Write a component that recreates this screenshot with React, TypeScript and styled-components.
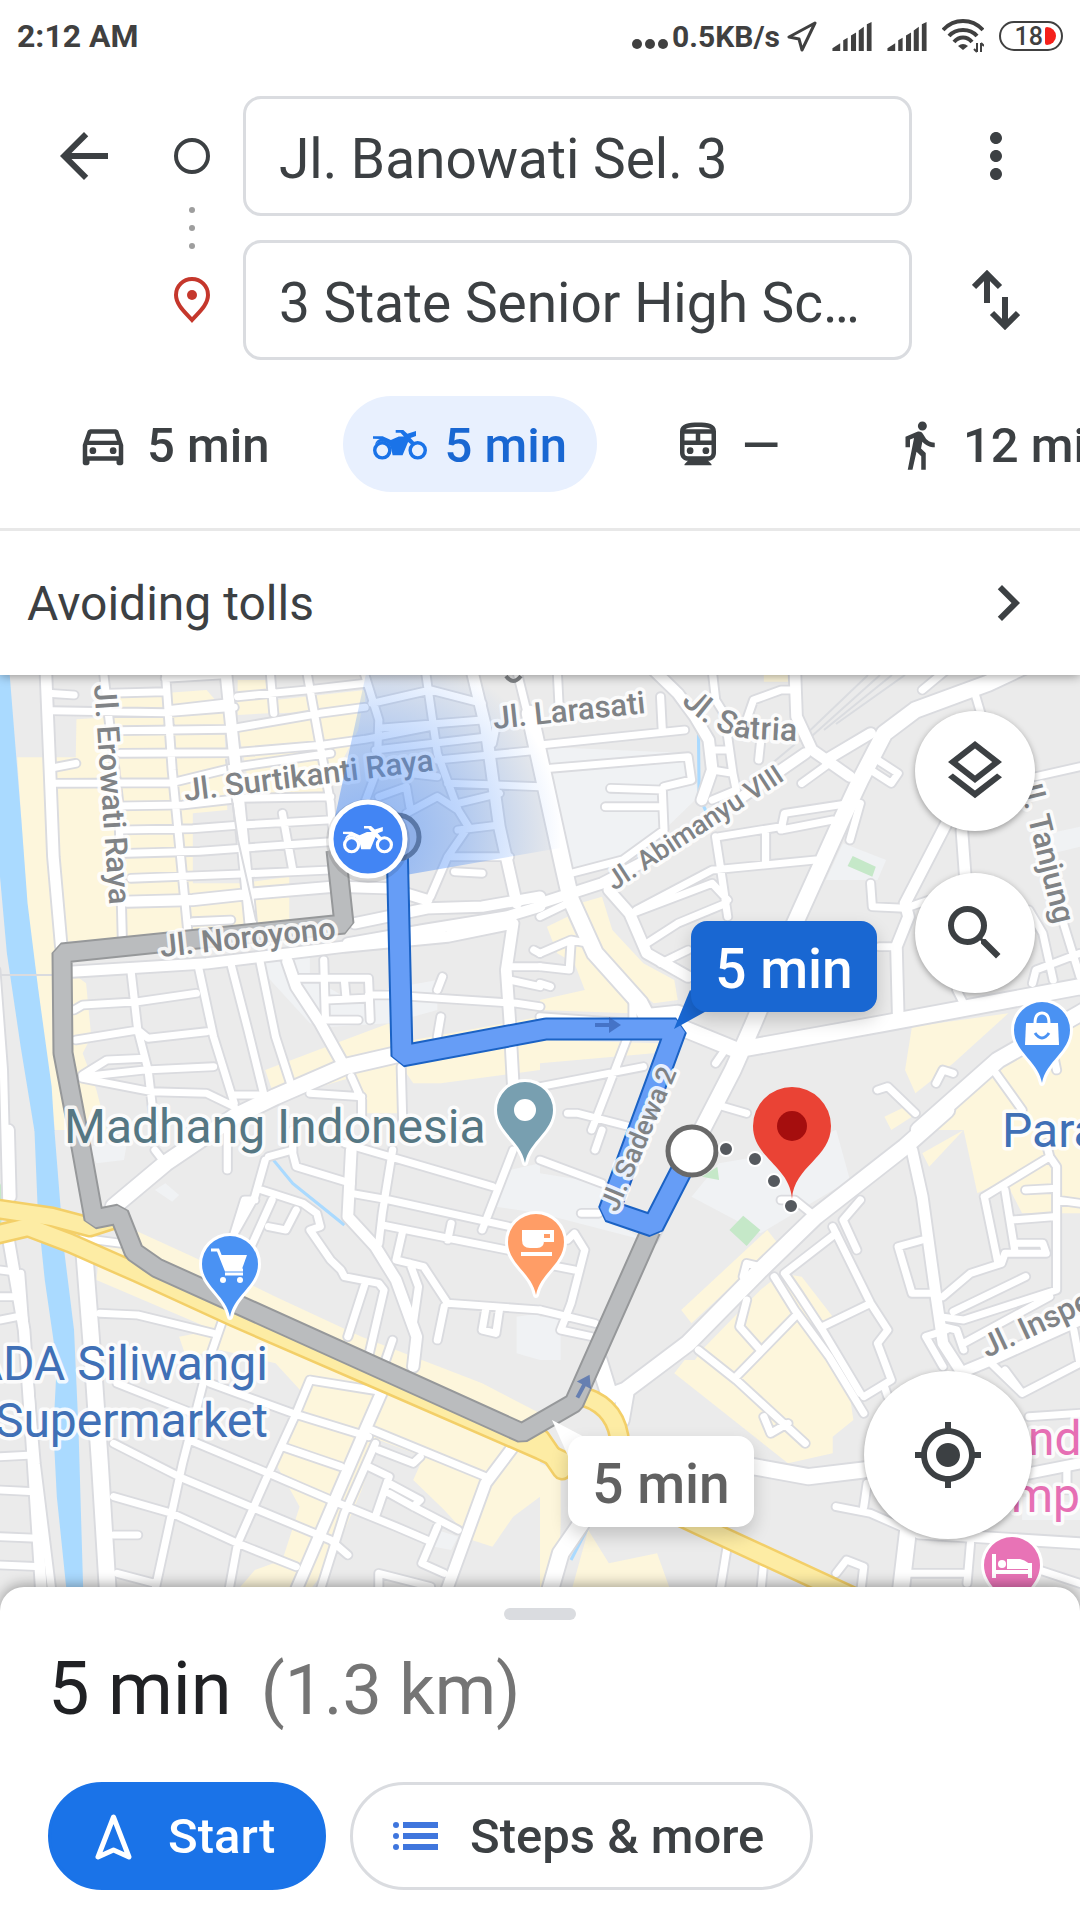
import React from 'react';
import styled, { createGlobalStyle } from 'styled-components';
import {
  MdArrowBack,
  MdChevronRight,
  MdDirectionsWalk,
  MdMoreVert,
  MdMyLocation,
  MdOutlineDirectionsCar,
  MdOutlineDirectionsTransit,
  MdOutlineLayers,
  MdSearch,
} from 'react-icons/md';

const ink = '#3c4043';
const line = '#dadce0';
const blue = '#1a73e8';
const deepBlue = '#1967d2';
const sans = "Roboto, 'Noto Sans', 'Liberation Sans', sans-serif";

const GlobalStyle = createGlobalStyle`
  *, *::before, *::after { box-sizing: border-box; }
  body { margin: 0; background: #fff; }
  button, input { font-family: inherit; color: inherit; margin: 0; }
  button { border: 0; padding: 0; background: none; cursor: pointer; }
  svg { display: block; flex: none; }
`;

const Page = styled.div`
  display: flex;
  flex-direction: column;
  min-height: 100vh;
  font-family: ${sans};
  color: ${ink};
  background: #fff;
  overflow: hidden;
`;

/* ---------- status bar ---------- */

const StatusBar = styled.div`
  display: flex;
  align-items: center;
  justify-content: space-between;
  height: 72px;
  padding: 0 17px;
  font-weight: 700;
  font-size: 32px;
  color: #404040;
`;

const StatusItems = styled.div`
  display: flex;
  align-items: center;
  gap: 15px;
`;

const Speed = styled.span`
  display: flex;
  align-items: center;
  gap: 4px;
  font-size: 30px;
  margin-right: -8px;
`;

const Battery = styled.span`
  display: flex;
  align-items: center;
  justify-content: flex-end;
  gap: 2px;
  width: 64px;
  height: 30px;
  padding-right: 5px;
  border: 2px solid #404040;
  border-radius: 15px;
  font-size: 25px;
  font-weight: 500;
`;

const Charge = styled.span`
  width: 11px;
  height: 18px;
  border-radius: 2px 9px 9px 2px;
  background: #f4201b;
`;

/* ---------- header ---------- */

const Header = styled.header`
  position: relative;
  z-index: 2;
  background: #fff;
  box-shadow: 0 1px 10px rgba(0, 0, 0, 0.4);
`;

const Endpoints = styled.form`
  display: grid;
  grid-template-columns: 168px 48px 1fr 168px;
  grid-template-rows: 120px 120px;
  row-gap: 24px;
  padding-top: 24px;
`;

const IconButton = styled.button`
  display: grid;
  place-items: center;
  font-size: 72px;
`;

const Markers = styled.div`
  grid-column: 2;
  grid-row: 1 / span 2;
  display: flex;
  flex-direction: column;
  align-items: center;
  justify-content: space-between;
  padding: 36px 0;
`;

const Field = styled.input`
  grid-column: 3;
  min-width: 0;
  margin-left: 27px;
  padding: 6px 32px 0 33px;
  border: 3px solid ${line};
  border-radius: 18px;
  background: #fff;
  outline: none;
  font-size: 55px;
  text-overflow: ellipsis;
`;

const Modes = styled.nav`
  display: flex;
  gap: 44px;
  padding: 36px 0 36px 46px;
  border-bottom: 3px solid #e8e8e8;
  overflow: hidden;
`;

const Mode = styled.button<{ $on?: boolean }>`
  flex: none;
  display: flex;
  align-items: center;
  gap: 17px;
  min-width: 177px;
  height: 96px;
  padding: 2px 30px 0;
  border-radius: 48px;
  font-size: 49px;
  font-weight: 500;
  white-space: nowrap;
  color: ${(p) => (p.$on ? deepBlue : ink)};
  background: ${(p) => (p.$on ? '#e8f0fe' : 'transparent')};
  svg { color: ${(p) => (p.$on ? blue : ink)}; }
`;

const Options = styled.button`
  display: flex;
  align-items: center;
  justify-content: space-between;
  width: 100%;
  height: 144px;
  padding: 0 36px 0 27px;
  font-size: 48px;
`;

/* ---------- map ---------- */

const MapArea = styled.main`
  position: relative;
  flex: 1;
  min-height: 600px;
  background: #ebebeb;
  overflow: hidden;
`;

const MapCanvas = styled.svg`
  position: absolute;
  inset: 0;
  width: 100%;
  height: 100%;
`;

const Fab = styled.button<{ $big?: boolean }>`
  display: grid;
  place-items: center;
  width: ${(p) => (p.$big ? 168 : 120)}px;
  height: ${(p) => (p.$big ? 168 : 120)}px;
  border-radius: 50%;
  background: #fff;
  font-size: 72px;
  box-shadow: 0 2px 6px rgba(0, 0, 0, 0.35);
`;

const FabColumn = styled.div`
  position: absolute;
  top: 36px;
  right: 45px;
  display: flex;
  flex-direction: column;
  gap: 42px;
`;

const FabCorner = styled.div`
  position: absolute;
  right: 48px;
  bottom: 76px;
`;

const Callout = styled.button<{ $x: number; $y: number; $main?: boolean }>`
  position: absolute;
  left: ${(p) => p.$x}px;
  top: ${(p) => p.$y}px;
  width: 186px;
  height: 91px;
  padding-top: 5px;
  border-radius: 16px;
  font-size: 55px;
  font-weight: 500;
  color: ${(p) => (p.$main ? '#fff' : '#616161')};
  background: ${(p) => (p.$main ? deepBlue : '#fff')};
  box-shadow: 0 8px 18px rgba(0, 0, 0, 0.18);
`;

const Label = styled.text<{ $size?: number; $tone?: string }>`
  font-family: ${sans};
  font-size: ${(p) => p.$size ?? 31}px;
  font-weight: ${(p) => (p.$tone ? 400 : 500)};
  fill: ${(p) => p.$tone ?? '#808386'};
  stroke: #fff;
  stroke-opacity: 0.85;
  stroke-width: 7px;
  stroke-linejoin: round;
  paint-order: stroke;
`;

/* ---------- bottom sheet ---------- */

const Sheet = styled.section`
  position: relative;
  z-index: 2;
  margin-top: -28px;
  padding: 21px 48px 30px;
  border-radius: 24px 24px 0 0;
  background: #fff;
  box-shadow: 0 -2px 14px rgba(0, 0, 0, 0.35);
`;

const Handle = styled.div`
  width: 72px;
  height: 12px;
  margin: 0 auto;
  border-radius: 6px;
  background: ${line};
`;

const Summary = styled.h1`
  display: flex;
  align-items: baseline;
  gap: 29px;
  margin: 27px 0 51px;
  font-size: 74px;
  line-height: 84px;
  font-weight: 400;
  color: #202124;
`;

const Distance = styled.span`
  font-size: 70px;
  line-height: 80px;
  color: #757575;
`;

const Actions = styled.div`
  display: flex;
  gap: 24px;
`;

const Action = styled.button<{ $primary?: boolean }>`
  display: flex;
  align-items: center;
  gap: ${(p) => (p.$primary ? 36 : 32)}px;
  min-width: 278px;
  height: 108px;
  padding: 0 46px 0 ${(p) => (p.$primary ? 44 : 40)}px;
  border: 3px solid ${(p) => (p.$primary ? blue : line)};
  border-radius: 54px;
  font-size: 49px;
  font-weight: 500;
  color: ${(p) => (p.$primary ? '#fff' : ink)};
  background: ${(p) => (p.$primary ? blue : '#fff')};
`;

/* ---------- icons ---------- */

const Motorcycle = ({ width = 54 }: { width?: number }) => (
  <svg width={width} height={(width * 91) / 157} viewBox="0 0 157 91" fill="currentColor" aria-hidden>
    <circle cx="27" cy="62" r="22" fill="none" stroke="currentColor" strokeWidth="10" />
    <circle cx="130" cy="62" r="22" fill="none" stroke="currentColor" strokeWidth="10" />
    <path d="M0 21H28L52 32L75 22H90L80 11H66V3H88L100 14L125 6V20L109 26L124 42L112 46L102 38L86 76H57L54 62Q50 38 27 36Q14 36 6 44Q10 32 20 29L0 28Z" />
  </svg>
);

const Signal = () => (
  <svg width="40" height="29" viewBox="0 0 116 86" fill="currentColor" aria-hidden>
    <path d="M0 86V78L23 63V86ZM32 86V54L45 47V86ZM55 86V40L70 31V86ZM78 86V25L93 14V86ZM102 86V7L116 0V86Z" />
  </svg>
);

const Wifi = () => (
  <svg width="42" height="34" viewBox="0 0 42 34" fill="none" stroke="currentColor" strokeWidth="4" aria-hidden>
    <path d="M1 11C12 -1 30 -1 41 11M7 17C14 9 28 9 35 17M12 23C17 17 25 17 30 23" />
    <path d="M16 27Q21 23 26 27L21 31Z" fill="currentColor" stroke="none" />
    <path d="M35 24V33M39 33V24M32 30L35 33M42 27L39 24" strokeWidth="2" />
  </svg>
);

const Share = () => (
  <svg width="30" height="31" viewBox="0 0 30 31" fill="none" stroke="currentColor" strokeWidth="3" strokeLinejoin="round" aria-hidden>
    <path d="M28 2L2 16L12 18L15 29Z" />
  </svg>
);

const Dots = () => (
  <svg width="36" height="28" viewBox="0 0 36 28" fill="currentColor" aria-hidden>
    <circle cx="5" cy="22" r="5" />
    <circle cx="18" cy="22" r="5" />
    <circle cx="31" cy="22" r="5" />
  </svg>
);

const Swap = () => (
  <svg width="48" height="60" viewBox="0 0 48 60" fill="none" stroke="currentColor" strokeWidth="6" aria-hidden>
    <path d="M15 33V5M2 17L15 4L28 17M33 27V55M20 43L33 56L46 43" />
  </svg>
);

const Compass = () => (
  <svg width="37" height="48" viewBox="0 0 37 48" fill="none" stroke="currentColor" strokeWidth="5" strokeLinejoin="round" aria-hidden>
    <path d="M18.500 5L3 45L18.500 38L34 45Z" />
  </svg>
);

const Steps = () => (
  <svg width="45" height="30" viewBox="0 0 45 30" fill="#3f76dd" aria-hidden>
    <circle cx="3" cy="4" r="3" />
    <circle cx="3" cy="15" r="3" />
    <circle cx="3" cy="26" r="3" />
    <path d="M10 1H45V7H10ZM10 12H45V18H10ZM10 23H45V29H10Z" />
  </svg>
);

/* ---------- map data: four tiles, each drawn on a 1568 x 1380 grid ---------- */

type Tile = {
  x: number;
  y: number;
  shops: string;
  campus: string;
  park: string;
  water: string;
  stream: string;
  small: string;
  medium: string;
  large: string;
};

const tiles: Tile[] = [
  {
    x: 0,
    y: 670,
    shops:
      'M50 262H220L222 148L340 140V80L470 70L600 60L650 120L660 420L560 430V640L700 640L840 620V750L560 790L190 815L205 905L250 940L265 1100L240 1150L280 1260L310 1380H160L110 950L80 720L62 450ZM690 170L900 140L1060 60L1040 180L980 300L720 330ZM690 30H780V130L690 135ZM800 90L1060 60V120L800 130ZM770 1200L1000 1110L1130 1060L1200 1110L1568 1040V1200L1280 1240H1200L1160 1180L800 1290ZM1030 1210L1160 1180V1330H1050ZM720 330L980 310L960 370L720 390Z',
    campus: 'M740 880L900 860V920L1000 980L1270 930V1020L1130 1060L960 1070L900 1060Z',
    park: '',
    water: 'M0 0H27L62 450L80 700L110 950L150 1250L158 1382H100L60 1130L20 850L0 620Z',
    stream: '',
    small:
      'M140 70L215 75M145 295L220 280M150 122L480 128L680 112M310 70L480 65M480 25L640 15M500 118L650 100M340 182L660 178L930 130L1060 112M350 250L680 248L940 225L1060 208L1250 170M160 340L500 338L690 290L960 250M340 408L530 405L700 385L960 380M350 480L560 476L700 465L950 450M370 550L580 544L960 515M380 625L700 612L960 600M560 755L670 750M690 80L890 60L1060 40M300 0L345 400L355 800M480 0L500 300L545 780M785 10L795 130M820 430L850 600M890 0L925 200L960 400L975 600M1055 0L1100 150L1095 300L1000 560M1235 0L1270 250L1330 420M1500 0L1560 250M1080 100L1250 60L1400 100M1100 175L1400 150M1090 240L1420 200M1270 270L1568 240M1300 340L1568 350M1330 400L1450 370M1180 430L1270 380L1330 420L1360 470L1300 560L1250 680M1330 480L1450 465M1310 560L1480 560M1320 605L1400 610M1100 300L1270 320M1100 380L1180 350L1190 410M380 900L400 1080L430 1200L450 1380M575 885L620 1100L680 1300M670 880L720 1080L770 1290M755 875L800 1100L850 1260M940 870L945 1050H1040M870 925H1070L1075 1050M950 990L1060 985M1000 930L1005 985M1070 975H1130L1500 1000L1568 1010M215 1020L240 1005L400 995L570 970M220 1110L400 1080L430 1105L600 1085M240 1215L310 1170L420 1165M240 1220L420 1200L620 1190M240 1225L440 1265L600 1270L680 1310M680 1275H750M1165 1190L1170 1380M1020 1220L1050 1290V1340M900 1270L1050 1280M1285 920L1270 960M1280 1040L1270 1100M1480 890H1568M1480 930L1568 950M-12 900L10 1200L20 1600M1440 170L1430 220M1568 850L1550 840',
    medium:
      'M133 0L145 300L155 560L178 830M655 0L685 300L730 780M1370 0L1410 170L1450 470L1500 700M370 695L560 690L740 670L970 650L1130 655L1240 690M210 905L600 880L1000 830L1300 800L1490 760M1030 760L1240 715L1400 710L1568 680M1010 820L1230 780L1470 740L1568 710M835 875L860 950L930 1060L1000 1190M1490 760L1470 900L1480 1050L1490 1240',
    large: 'M330 1610L480 1480L680 1340L800 1280L1000 1190L1170 1150L1568 1080',
  },
  {
    x: 540,
    y: 670,
    shops:
      'M115 700L180 680L210 780L300 880L390 930L400 990L330 1000L280 960L180 870ZM20 770L80 740L110 810L180 880L260 980V1030L0 1020V990L130 960L100 880L50 850ZM0 1110L350 1120L330 1150L0 1180ZM1080 1070L1360 1030L1200 1180L1090 1270L1060 1200ZM1568 1030L1380 1110L1180 1330L1150 1380H1568ZM1000 1340L1060 1310L1080 1340L1020 1380ZM650 0H720V35H650Z',
    campus: 'M0 230L440 250L460 380L340 500L240 560L90 600L40 320L0 300ZM880 520L1005 570L980 630L830 630ZM1480 490L1568 470V530L1490 550Z',
    park: 'M908 558L975 590L965 620L893 588Z',
    water: '',
    stream: 'M340 0L385 60M460 170L462 380L485 430',
    small:
      'M1260 60L1280 130M960 640L965 710L1060 715L1130 690M985 830H1030M1568 290L1440 320M1210 960L1230 1000M1420 720L1460 790L1490 930M1520 760L1568 920M1430 940L1440 900L1568 850M600 150L620 90L700 60H730M760 340L840 280M960 300L1020 340L1040 310L980 270M900 510L930 400M700 480L710 430L900 400M700 480L850 450M520 500L700 470M655 490V580M280 720L500 600L800 570M510 500L525 600L545 740M90 610L240 570L360 480L355 360L205 355M190 410H350M30 295L430 260L440 330L360 350M0 225L420 180M355 180L350 80M50 0L55 100M500 0L510 90L540 140M490 240H550M500 300L560 310L545 200L560 170M560 310L570 360L500 390M640 220L635 270M0 740L80 700M270 730L500 640L545 690M310 820L400 760L540 700M350 880L430 840M0 850L90 810L140 820M90 820L85 900L0 890M270 980V1060L150 1380M0 1250L300 1190M80 1330H110L260 1370M510 1180L530 1150M500 1300L600 1330M980 1260L1010 1250L1090 1330M1150 1240L1170 1200L1200 1210M1310 1190L1400 1320M1500 1200L1480 1100M0 1040L270 1060M0 940L30 950M1110 60L1180 0',
    medium:
      'M1180 460L1060 700L1070 740L1035 830L1040 1030M1225 480L1235 620M330 0L400 70L450 140L490 210L500 300L470 390M830 270L960 190M0 700L180 640L330 560L560 400L700 300L770 250M200 660L260 730L310 850L430 920M740 0L745 140L790 240L900 320',
    large:
      'M1568 -90L1300 40L1090 120L1000 190L930 330L880 440L740 760L620 1060L560 1200L440 1440L320 1700M380 1060L570 1140L1000 1060L1568 950M-30 130L70 600L90 690L160 850L290 1000L310 1040L400 1030M1700 950L1568 1030L1330 1170L1100 1380',
  },
  {
    x: 0,
    y: 1130,
    shops:
      'M390 300L560 380L800 500L1050 620L1400 760L1568 850V1100L1490 1160L1430 1250L1370 1230L1290 1140L1200 1050L1230 980L1100 930L1050 1080L960 1300L900 1380H690L740 1320L820 1290L870 1130L800 1000L830 900L880 790L800 700L640 660L540 680L520 620L620 600L280 450L290 350Z',
    campus: 'M1480 120L1568 100V250L1440 230ZM1500 560L1568 550V690L1500 670ZM260 50L370 30L360 90L280 100ZM450 180L480 160L520 195L500 215ZM1270 1200L1330 1220L1310 1260L1260 1250Z',
    park: 'M0 160L22 200L0 290Z',
    water: 'M100 0H158L185 350L215 600L228 900L245 1500H205L165 1100L155 900L165 700L130 450L110 250Z',
    stream: 'M790 85L850 160L1000 285',
    small:
      'M60 430L80 700L105 1000L150 1380M0 420L40 425M0 500H40M0 570L50 560M0 980L95 975M0 1080L100 1085M0 1220L110 1225M0 1305L120 1310M240 325L350 340M660 0V120M450 60L480 100M770 90L740 200L680 310L710 210H740M850 0V70L860 110L1020 160M780 80L850 60M1000 40L1430 170M760 180L880 220L920 250L930 290L900 300L960 390L990 420L1000 440L1100 460L1115 480L1070 680M790 210L720 370M780 290L830 300L860 240M1140 60L1110 250L1100 340M1020 190L1130 210L1568 310M1310 280L1300 330M1110 285L1568 380M1170 300L1150 390L1230 410L1300 520L1568 540M1190 400L1215 470L1200 580M1290 530L1270 630M1410 540L1400 600L1440 610L1450 540M1060 460L1010 620M1140 630L1120 690M1490 60L1400 300M290 550L400 555L620 610M650 560L610 680L530 1000L450 1380M340 760L560 850M610 760L850 850L1070 920M330 940L530 1045L750 1140L960 1230L1010 1275M550 930L780 1030L960 1110L1150 1190L1240 1230M330 1100L500 1150L690 1240L860 1310M820 950L990 1010M900 750L860 850L780 1030L690 1240L665 1380M900 750L1110 785M1090 940L1000 1150L930 1380M1080 900L1410 1040M1100 960L1200 1000L1220 980M1070 1010L1130 1040L1090 1160M1200 1130L1220 1110L1130 1060M1130 1090L1200 1130L1330 1200M1270 1190L1225 1300L1290 1330M330 1215H400M340 1330L450 1360M1100 1450V1330L1250 1370',
    medium:
      'M25 0L30 200M25 330L70 600L90 900L120 1380M1020 60L1010 260L1090 350L1150 450L1210 620L1200 710M1115 770L1060 900L960 1140L860 1380M1490 950L1410 1060L1290 1400',
    large: 'M245 370L270 700L290 1000L320 1500',
  },
  {
    x: 540,
    y: 1130,
    shops:
      'M410 540L660 300L690 340L440 580ZM470 660L640 480L700 430L760 440L850 560L820 600L900 800L910 870L850 920V970L720 1000L390 730L420 690L450 690ZM1110 70L1230 0H1568V250L1400 250L1350 150L1270 190L1230 0L1130 110ZM0 1000L60 1030V1180L50 1500H0ZM60 1500L140 1200L200 1300L340 1270L420 1500Z',
    campus: 'M0 130L180 160L170 250L300 330L0 250ZM440 200L520 100L630 80L860 0L900 150L640 310ZM0 560L60 560V690L0 690ZM1400 1100L1568 1120V1170H1400Z',
    park: 'M590 257L640 300L600 348L550 300ZM470 140L515 110L520 150Z',
    water: '',
    stream: 'M140 1190L90 1290',
    small:
      'M1110 330L1040 350L1080 490H1140M1170 500L1250 430L1340 400L1350 370H1470L1460 340H1380M1350 180L1380 370M1290 200L1330 400M1290 200L1480 80L1500 110V480L1410 510L1230 570L1160 560M1200 545L1410 440M1410 180L1500 175M1370 270L1490 260M1500 210L1568 220M1480 80L1470 40M1170 590L1210 600L1230 660M1180 600L1120 620L1170 710M1230 640L1480 500M1310 700L1400 790L1568 700M1350 720L1400 790M1550 600L1568 700M1420 860L1568 850M930 210L880 270L920 360M700 210H740L800 260M850 290L960 520L1010 600L980 640L1020 750L940 800M860 310L710 430M710 430L750 490L820 600L930 790M680 440L740 540L840 680L940 850M960 520L820 590M740 560L570 740M600 510L580 590L640 660M460 660L570 750L770 940M650 860L670 910L720 880M590 440L600 400L640 410M0 90L180 160M160 60L180 0M120 250H170M80 330L100 310L130 360L90 520L60 600L150 620M0 540L160 580M0 400L100 420M950 1060L940 1130M860 1130L960 1150L1070 1200M545 1240L520 1400M650 1290L640 1400M860 1330L890 1290L940 1310L930 1400M1250 1240L1240 1360M1060 1330H1230M1450 1320L1568 1360M1530 1020V1080M1000 770L1010 800',
    medium: 'M1080 60L1110 200L1150 500L1170 640L1220 720M1240 720L1310 690L1568 570M1100 1210L1568 1240M1420 1030L1568 1000',
    large: 'M1180 -60L1060 50L800 260L640 420L430 640L250 780L200 800M200 790L170 690M250 780L235 870M620 1010L780 1040L940 1020M1070 1190L1040 1450M120 1180L60 1270L10 1450',
  },
];

const roadSizes = [
  ['small', 21],
  ['medium', 31],
  ['large', 46],
] as const;

const tileTransform = (t: Tile) => `translate(${t.x} ${t.y}) scale(${540 / 1568} ${460 / 1380})`;

const highways = [
  'M-10 1208L52 1217L90 1227L118 1218',
  'M-10 1236L28 1227L70 1243L138 1273L234 1317L386 1383L540 1450L700 1526L860 1600',
  'M585 1397Q618 1408 620 1445',
  'M540 1438L562 1470',
];

const bluePath = 'M397 840L402 1056L546 1029H676L609 1211L653 1226L692 1150';
const greyPath = 'M336 850L344 924L62 953L63 1053L81 1147L94 1219L119 1214L134 1252L157 1268L522 1433L574 1403L651 1230';

const Pin = ({ x, y, color, children }: { x: number; y: number; color: string; children: React.ReactNode }) => (
  <g transform={`translate(${x} ${y})`}>
    <path d="M0 53C-4 31 -28 22 -28 0A28 28 0 1 1 28 0C28 22 4 31 0 53Z" fill={color} stroke="#fff" strokeWidth="6" paintOrder="stroke" strokeLinejoin="round" />
    {children}
  </g>
);

const Arrow = ({ x, y, turn }: { x: number; y: number; turn: number }) => (
  <path
    transform={`translate(${x} ${y}) rotate(${turn})`}
    d="M-12 -2H2V-8L14 0L2 8V2H-12Z"
    fill="#2f56a8"
    fillOpacity="0.6"
  />
);

const CityMap = () => (
  <MapCanvas viewBox="0 675 1080 940" preserveAspectRatio="xMinYMin slice" role="img" aria-label="Route map">
    <defs>
      <radialGradient id="beam" gradientUnits="userSpaceOnUse" cx="368" cy="838" r="195">
        <stop offset="0" stopColor="#4a8cf7" stopOpacity="0.6" />
        <stop offset="0.5" stopColor="#4a8cf7" stopOpacity="0.35" />
        <stop offset="1" stopColor="#4a8cf7" stopOpacity="0" />
      </radialGradient>
      <path id="satria" d="M681 702C702 724 722 736 752 739L815 742" />
    </defs>
    <rect x="0" y="660" width="1080" height="980" fill="#ebebeb" />
    {tiles.map((t) => (
      <g key={`${t.x}-${t.y}`} transform={tileTransform(t)}>
        <path d={t.campus} fill="#f0f2f4" />
        <path d={t.shops} fill="#fdf6dc" />
        <path d={t.park} fill="#c5e8c8" />
        <path d={t.water} fill="#aadaff" />
        <path d={t.stream} fill="none" stroke="#aadaff" strokeWidth="9" />
      </g>
    ))}
    <path d="M868 675L800 740L740 790M880 675L812 736M892 675L824 730M905 675L836 724" fill="none" stroke="#dadce0" strokeWidth="2" />
    <g fill="none" strokeLinecap="round" strokeLinejoin="round">
      {tiles.map((t) => (
        <g key={`${t.x}-${t.y}`} transform={tileTransform(t)} stroke="#dadbdf">
          {roadSizes.map(([kind, w]) => (
            <path key={kind} d={t[kind]} strokeWidth={w + 11} />
          ))}
        </g>
      ))}
      {tiles.map((t) => (
        <g key={`${t.x}-${t.y}`} transform={tileTransform(t)} stroke="#fff">
          {roadSizes.map(([kind, w]) => (
            <path key={kind} d={t[kind]} strokeWidth={w} />
          ))}
        </g>
      ))}
      <path d="M226 760L238 840L256 920M0 975H52" stroke="#dadbdf" strokeWidth="2" />
      <g stroke="#f3cf68" strokeWidth="21">
        {highways.map((d) => <path key={d} d={d} />)}
      </g>
      <g stroke="#fdeca4" strokeWidth="16">
        {highways.map((d) => <path key={d} d={d} />)}
      </g>
    </g>
    <path d="M506 676Q513 686 521 676" fill="none" stroke="#808386" strokeWidth="4" />

    <Label x="185" y="801" transform="rotate(-7 185 801)">Jl. Surtikanti Raya</Label>
    <Label x="494" y="729" transform="rotate(-6 494 729)">Jl. Larasati</Label>
    <Label x="94" y="685" transform="rotate(86 94 685)">Jl. Erowati Raya</Label>
    <Label x="614" y="891" $size={27} transform="rotate(-33 614 891)">Jl. Abimanyu VIII</Label>
    <Label $size={32}><textPath href="#satria">Jl. Satria</textPath></Label>
    <Label x="1018" y="778" transform="rotate(76 1018 778)">Jl. Tanjung</Label>
    <Label x="987" y="1358" transform="rotate(-25 987 1358)">Jl. Inspeksi</Label>

    <path d="M330 840L369 660H560V848L400 876Z" fill="url(#beam)" />

    <g fill="none" strokeLinejoin="bevel">
      <path d={greyPath} stroke="#96989a" strokeWidth="21" />
      <path d={greyPath} stroke="#babcbe" strokeWidth="17" />
      <path d={bluePath} stroke="#1b62c4" strokeWidth="23" />
      <path d={bluePath} stroke="#669df6" strokeWidth="19" />
    </g>
    <Arrow x={607} y={1025} turn={0} />
    <Arrow x={583} y={1387} turn={-62} />

    <Label x="161" y="957" transform="rotate(-6 161 957)">Jl. Noroyono</Label>
    <Label x="617" y="1213" $size={27} transform="rotate(-67 617 1213)">Jl. Sadewa 2</Label>

    <circle cx="397" cy="837" r="22" fill="#8fb0e8" stroke="#5a78a8" strokeWidth="5" />
    <circle cx="368" cy="841" r="42" fill="#000" fillOpacity="0.1" />
    <circle cx="368" cy="839" r="37" fill="#4285f4" stroke="#fff" strokeWidth="5" />
    <g color="#fff" transform="translate(343 825)"><Motorcycle width={50} /></g>

    <circle cx="692" cy="1151" r="24" fill="#fff" stroke="#696969" strokeWidth="5" />
    <g fill="#55595e" stroke="#fff" strokeWidth="2">
      <circle cx="726" cy="1149" r="7" />
      <circle cx="755" cy="1159" r="7" />
      <circle cx="774" cy="1181" r="7" />
      <circle cx="791" cy="1206" r="7" />
    </g>
    <path d="M792 1199C790 1166 753 1158 753 1126A39 39 0 1 1 831 1126C831 1158 794 1166 792 1199Z" fill="#ea4335" />
    <circle cx="792" cy="1126" r="15" fill="#a50e0e" />

    <Pin x={525} y={1110} color="#789fb0"><circle r="11" fill="#fff" /></Pin>
    <Pin x={230} y={1264} color="#4a92f3">
      <path d="M-19 -14H-12L-4 6H13M-5 10H13" fill="none" stroke="#fff" strokeWidth="3" />
      <path d="M-11 -9H17L12 5H-5Z" fill="#fff" />
      <circle cx="-7" cy="16" r="3" fill="#fff" />
      <circle cx="10" cy="16" r="3" fill="#fff" />
    </Pin>
    <Pin x={536} y={1242} color="#ff9d66">
      <path d="M-14 -12H8V-1Q8 6 1 6H-6Q-14 6 -14 -2Z" fill="#fff" />
      <path d="M8 -10H16V-2H8M-15 12H16" fill="none" stroke="#fff" strokeWidth="4" />
    </Pin>
    <Pin x={1042} y={1030} color="#4a92f3">
      <path d="M-16 -7H16L17 15H-17Z" fill="#fff" />
      <path d="M-7 -7Q-7 -17 0 -17Q7 -17 7 -7" fill="none" stroke="#fff" strokeWidth="3" />
      <path d="M-7 3Q0 13 7 3" fill="none" stroke="#4a92f3" strokeWidth="3" />
    </Pin>
    <Pin x={1012} y={1565} color="#e873b6">
      <path d="M-18 -11V13M-18 7H18M18 -2V13" fill="none" stroke="#fff" strokeWidth="4" />
      <path d="M-5 4V-6H8Q18 -4 18 4Z" fill="#fff" />
      <circle cx="-10" cy="-1" r="4" fill="#fff" />
    </Pin>

    <Label x="64" y="1143" $size={48} $tone="#557783">Madhang Indonesia</Label>
    <Label x="268" y="1380" $size={48} $tone="#4070b6" textAnchor="end">ADA Siliwangi</Label>
    <Label x="268" y="1437" $size={48} $tone="#4070b6" textAnchor="end">Supermarket</Label>
    <Label x="1002" y="1147" $size={48} $tone="#4070b6">Para</Label>
    <Label x="1028" y="1455" $size={48} $tone="#e66fb4">nd</Label>
    <Label x="1011" y="1512" $size={48} $tone="#e66fb4">mp</Label>

    <path d="M690 990L674 1029L712 1008Z" fill={deepBlue} />
    <path d="M568 1456L552 1420L590 1440Z" fill="#fff" />
  </MapCanvas>
);

const App = () => (
  <Page>
    <GlobalStyle />
    <Header>
      <StatusBar>
        <span>2:12 AM</span>
        <StatusItems>
          <Speed><Dots />0.5KB/s</Speed>
          <Share />
          <Signal />
          <Signal />
          <Wifi />
          <Battery>18<Charge /></Battery>
        </StatusItems>
      </StatusBar>
      <Endpoints onSubmit={(e) => e.preventDefault()}>
        <IconButton type="button" aria-label="Back"><MdArrowBack /></IconButton>
        <Markers>
          <svg width="48" height="48" viewBox="0 0 48 48" fill="none" stroke={ink} strokeWidth="4" aria-hidden>
            <circle cx="24" cy="24" r="16" />
          </svg>
          <svg width="6" height="42" viewBox="0 0 6 42" fill="#9e9e9e" aria-hidden>
            <circle cx="3" cy="3" r="3" />
            <circle cx="3" cy="21" r="3" />
            <circle cx="3" cy="39" r="3" />
          </svg>
          <svg width="48" height="48" viewBox="0 0 48 48" aria-hidden>
            <path d="M24 44C18 37 8 29 8 19A16 16 0 0 1 40 19C40 29 30 37 24 44Z" fill="none" stroke="#c5372c" strokeWidth="4" />
            <circle cx="24" cy="19" r="5" fill="#c5372c" />
          </svg>
        </Markers>
        <Field aria-label="Starting point" defaultValue="Jl. Banowati Sel. 3" />
        <IconButton type="button" aria-label="More options"><MdMoreVert /></IconButton>
        <Field aria-label="Destination" defaultValue="3 State Senior High Sc…" />
        <IconButton type="button" aria-label="Swap start and destination"><Swap /></IconButton>
      </Endpoints>
      <Modes aria-label="Travel modes">
        <Mode type="button"><MdOutlineDirectionsCar size={54} />5 min</Mode>
        <Mode type="button" $on aria-pressed="true"><Motorcycle />5 min</Mode>
        <Mode type="button"><MdOutlineDirectionsTransit size={54} />—</Mode>
        <Mode type="button"><MdDirectionsWalk size={54} />12 min</Mode>
      </Modes>
      <Options type="button">Avoiding tolls<MdChevronRight size={72} /></Options>
    </Header>

    <MapArea>
      <CityMap />
      <Callout type="button" $main $x={691} $y={246}>5 min</Callout>
      <Callout type="button" $x={568} $y={761}>5 min</Callout>
      <FabColumn>
        <Fab type="button" aria-label="Map layers"><MdOutlineLayers /></Fab>
        <Fab type="button" aria-label="Search along route"><MdSearch /></Fab>
      </FabColumn>
      <FabCorner>
        <Fab type="button" $big aria-label="Centre on my location"><MdMyLocation /></Fab>
      </FabCorner>
    </MapArea>

    <Sheet>
      <Handle />
      <Summary>5 min <Distance>(1.3 km)</Distance></Summary>
      <Actions>
        <Action type="button" $primary><Compass />Start</Action>
        <Action type="button"><Steps />Steps &amp; more</Action>
      </Actions>
    </Sheet>
  </Page>
);

export default App;
